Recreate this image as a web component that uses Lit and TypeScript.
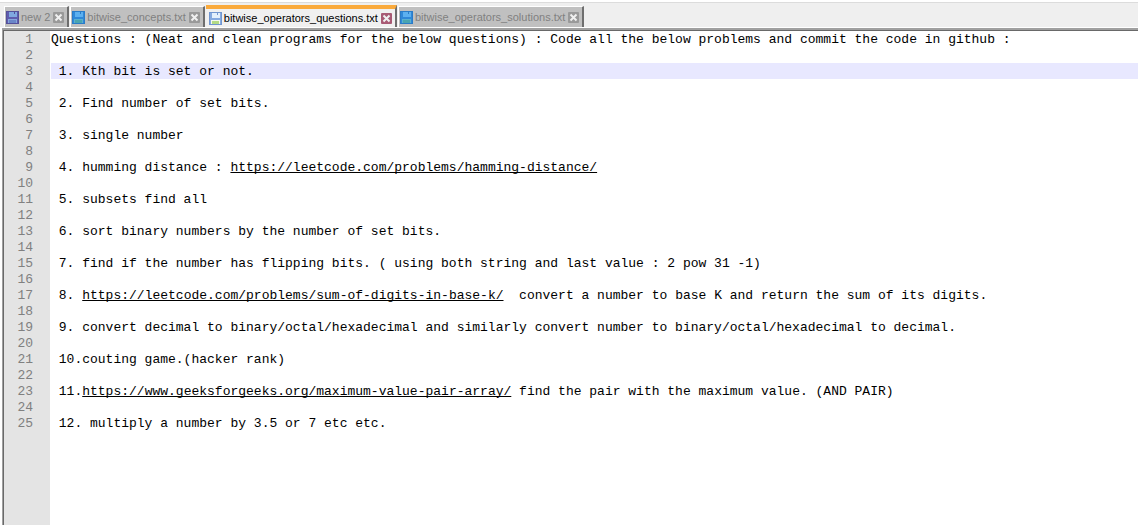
import { LitElement, html, css, svg, nothing } from "lit";
import { customElement, property, state } from "lit/decorators.js";

interface FileTab {
  name: string;
  tone: "purple" | "blue" | "light";
}

type Part = string | { url: string };

const TABS: FileTab[] = [
  { name: "new 2", tone: "purple" },
  { name: "bitwise_concepts.txt", tone: "blue" },
  { name: "bitwise_operators_questions.txt", tone: "light" },
  { name: "bitwise_operators_solutions.txt", tone: "blue" },
];

const LINES: Part[][] = [
  ["Questions : (Neat and clean programs for the below questions) : Code all the below problems and commit the code in github :"],
  [],
  [" 1. Kth bit is set or not."],
  [],
  [" 2. Find number of set bits."],
  [],
  [" 3. single number"],
  [],
  [" 4. humming distance : ", { url: "https://leetcode.com/problems/hamming-distance/" }],
  [],
  [" 5. subsets find all"],
  [],
  [" 6. sort binary numbers by the number of set bits."],
  [],
  [" 7. find if the number has flipping bits. ( using both string and last value : 2 pow 31 -1)"],
  [],
  [" 8. ", { url: "https://leetcode.com/problems/sum-of-digits-in-base-k/" }, "  convert a number to base K and return the sum of its digits."],
  [],
  [" 9. convert decimal to binary/octal/hexadecimal and similarly convert number to binary/octal/hexadecimal to decimal."],
  [],
  [" 10.couting game.(hacker rank)"],
  [],
  [" 11.", { url: "https://www.geeksforgeeks.org/maximum-value-pair-array/" }, " find the pair with the maximum value. (AND PAIR)"],
  [],
  [" 12. multiply a number by 3.5 or 7 etc etc."],
];

const TONES = {
  purple: { edge: "#54509a", body: "#5f5cae", top: "#7fa8e0", label: "#86a6dc", line: "#6a86c8" },
  blue: { edge: "#2a7cc8", body: "#3088d8", top: "#5cb0f0", label: "#58b0d0", line: "#4aa4b0" },
  light: { edge: "#7196d0", body: "#86aae0", top: "#e4f0fc", label: "#f4f9ee", line: "#b4da84" },
};

@customElement("disk-icon")
class DiskIcon extends LitElement {
  static styles = css`
    :host { display: block; width: 13px; height: 13px; }
    .icon { display: block; width: 100%; height: 100%; }
  `;

  @property() tone: keyof typeof TONES = "blue";

  render() {
    const t = TONES[this.tone];
    return html`<svg class="icon" viewBox="0 0 13 13" shape-rendering="crispEdges" aria-hidden="true">
      ${svg`
        <rect width="13" height="13" fill=${t.edge} />
        <rect x="1" y="1" width="11" height="11" fill=${t.body} />
        <rect x="3" y="1" width="8" height="5" fill=${t.top} />
        <rect x="8" y="1" width="1" height="2" fill=${t.edge} />
        <rect x="2" y="8" width="9" height="4" fill=${t.label} />
        <rect x="3" y="9" width="7" height="3" fill=${t.line} />
      `}
    </svg>`;
  }
}

@customElement("tab-strip")
class TabStrip extends LitElement {
  static styles = css`
    :host { display: block; }
    .strip {
      display: flex;
      align-items: flex-end;
      gap: 1px;
      height: 24px;
      padding: 0 4px;
      border-top: 1px solid #dcdcdc;
      border-bottom: 1px solid #fff;
      background: #efefef;
    }
    .tab {
      box-sizing: border-box;
      display: flex;
      align-items: center;
      height: 21px;
      padding: 0 3px 0 1px;
      background: #c0c0c0;
      border-top: 1px solid #fff;
      border-left: 1px solid #fff;
      border-right: 2px solid #6e6e6e;
      color: #808080;
    }
    .tab.active {
      height: 22px;
      padding: 0 3px;
      background: #f0f0f0;
      border-top: 4px solid #faaa3c;
      border-left: 0;
      color: #000;
    }
    .pick, .close {
      margin: 0;
      padding: 0;
      border: 0;
      background: none;
      color: inherit;
      cursor: pointer;
    }
    .pick {
      display: flex;
      align-items: center;
      gap: 2px;
      font: 11px/16px "Liberation Sans", Arial, sans-serif;
      white-space: nowrap;
    }
    .close { margin-left: 3px; width: 11px; height: 11px; }
    .cross { display: block; width: 11px; height: 11px; }
    .box { fill: #999; }
    .active .box { fill: #a85a74; }
    .mark { stroke: #f0f0f0; stroke-width: 2; }
  `;

  @property({ attribute: false }) tabs: FileTab[] = [];
  @state() private current = 2;

  render() {
    return html`<nav class="strip" aria-label="Open files">
      ${this.tabs.map(
        (tab, i) => html`<div class=${i === this.current ? "tab active" : "tab"}>
          <button class="pick" aria-current=${i === this.current ? "true" : nothing} @click=${() => (this.current = i)}>
            <disk-icon .tone=${tab.tone}></disk-icon>${tab.name}
          </button>
          <button class="close" aria-label=${`Close ${tab.name}`}>
            <svg class="cross" viewBox="0 0 11 11" aria-hidden="true">
              <rect class="box" width="11" height="11" rx="1" />
              <path class="mark" d="M2.5 2.5L8.5 8.5M8.5 2.5L2.5 8.5" />
            </svg>
          </button>
        </div>`,
      )}
    </nav>`;
  }
}

@customElement("text-pane")
class TextPane extends LitElement {
  static styles = css`
    :host { display: flex; flex-direction: column; }
    .pane {
      flex: 1;
      display: flex;
      flex-direction: column;
      border-top: 1px solid #696969;
      border-left: 1px solid #696969;
      background: #fff;
      font: 13px/18px "Liberation Mono", "Courier New", monospace;
      color: #000;
    }
    .row, .rest { display: grid; grid-template-columns: 46px minmax(0, 1fr); }
    .row { height: 16px; }
    .rest { flex: 1; }
    .gutter {
      padding-right: 17px;
      background: #e4e4e4;
      color: #808080;
      text-align: right;
    }
    .code { height: 16px; margin-left: 1px; white-space: pre; }
    .current .code { background: #e8e8ff; }
    .link {
      color: inherit;
      text-decoration: underline;
      text-decoration-skip-ink: none;
      text-underline-offset: 1px;
    }
  `;

  @property({ attribute: false }) lines: Part[][] = [];
  @property({ type: Number }) current = 0;

  private part(p: Part) {
    return typeof p === "string" ? p : html`<a class="link" href=${p.url}>${p.url}</a>`;
  }

  render() {
    return html`<div class="pane">
      ${this.lines.map(
        (line, i) => html`<div class=${i + 1 === this.current ? "row current" : "row"}>
          <span class="gutter">${i + 1}</span>
          <div class="code">${line.map((p) => this.part(p))}</div>
        </div>`,
      )}
      <div class="rest"><span class="gutter"></span></div>
    </div>`;
  }
}

@customElement("app-root")
class AppRoot extends LitElement {
  static styles = css`
    :host {
      box-sizing: border-box;
      display: flex;
      flex-direction: column;
      min-height: 100vh;
      padding-top: 2px;
      background: #fff;
    }
    .editor {
      flex: 1;
      margin-left: 2px;
      border-top: 2px solid #a0a0a0;
      border-left: 1px solid #a0a0a0;
    }
  `;

  render() {
    return html`
      <tab-strip .tabs=${TABS}></tab-strip>
      <text-pane class="editor" .lines=${LINES} .current=${3}></text-pane>
    `;
  }
}
